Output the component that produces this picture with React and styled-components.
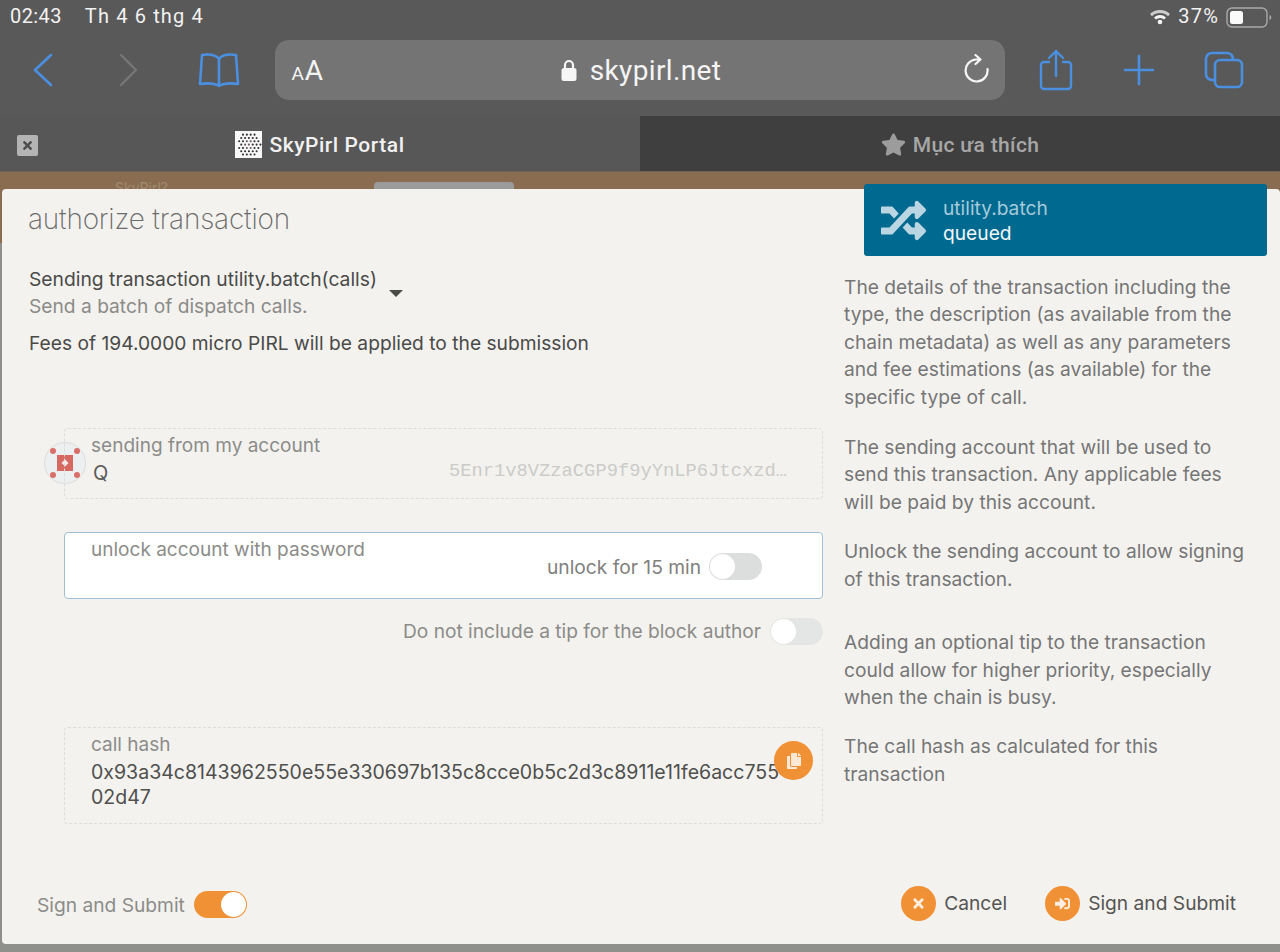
import React from "react";
import styled, { createGlobalStyle } from "styled-components";
import { FaRandom, FaCopy, FaTimes, FaSignInAlt, FaStar } from "react-icons/fa";

const Global = createGlobalStyle`
  html, body { margin: 0; padding: 0; background: #8f8f8c; }
  * { box-sizing: border-box; }
  body { font-family: Inter, "Liberation Sans", sans-serif; }
`;

const Screen = styled.div`
  position: relative;
  width: 1280px;
  height: 952px;
  overflow: hidden;
  display: flex;
  flex-direction: column;
`;

const Chrome = styled.div`
  height: 116px;
  background: #595959;
  display: flex;
  flex-direction: column;
`;

const StatusBar = styled.div`
  height: 40px;
  padding: 4px 8px 0 10px;
  display: flex;
  justify-content: space-between;
  color: #f2f2f2;
  font-family: Roboto, Inter, sans-serif;
  font-size: 20px;
  line-height: 24px;
  letter-spacing: 0.4px;
`;

const StatusLeft = styled.div`
  display: flex;
  gap: 23px;
`;

const DateText = styled.span`
  letter-spacing: 1.15px;
`;

const StatusRight = styled.div`
  display: flex;
  align-items: flex-start;
  gap: 7px;
`;

const Percent = styled.span`
  letter-spacing: 1.2px;
`;

const Toolbar = styled.div`
  height: 60px;
  display: flex;
  align-items: center;
  justify-content: space-between;
  padding: 0 36px 0 32px;
`;

const NavGroup = styled.div`
  width: 208px;
  display: flex;
  align-items: center;
  justify-content: space-between;
`;

const ActionGroup = styled.div`
  width: 205px;
  display: flex;
  align-items: center;
  justify-content: space-between;
`;

const AddressBar = styled.div`
  width: 730px;
  height: 60px;
  border-radius: 14px;
  background: #747474;
  display: grid;
  grid-template-columns: 100px 1fr 100px;
  align-items: center;
  padding: 0 14px 0 17px;
  color: #f4f4f4;
`;

const TextSize = styled.div`
  font-family: Roboto, Inter, sans-serif;
  font-size: 28px;
  letter-spacing: 0.8px;
  small { font-size: 19px; }
`;

const Domain = styled.div`
  display: flex;
  align-items: center;
  justify-content: center;
  gap: 13px;
  font-family: Roboto, Inter, sans-serif;
  font-size: 28px;
  letter-spacing: 0.35px;
`;

const ReloadSlot = styled.div`
  display: flex;
  justify-content: flex-end;
`;

const TabBar = styled.div`
  height: 56px;
  display: flex;
  border-bottom: 1px solid #6f6250;
`;

const Tab = styled.div`
  position: relative;
  flex: 1;
  display: flex;
  align-items: center;
  justify-content: center;
  gap: 7px;
  padding-top: 2px;
  font-family: Roboto, Inter, sans-serif;
  font-size: 21px;
  font-weight: 500;
  letter-spacing: ${(p) => (p.$active ? 0.55 : 0.35)}px;
  background: ${(p) => (p.$active ? "#575757" : "#3f3f3f")};
  color: ${(p) => (p.$active ? "#f1f1f1" : "#a7a7a7")};
`;

const TabClose = styled.div`
  position: absolute;
  left: 17px;
  top: 19px;
  width: 21px;
  height: 21px;
  border-radius: 2px;
  background: #b4b4b4;
  color: #4c4c4c;
  display: flex;
  align-items: center;
  justify-content: center;
  font-size: 13px;
`;

const PageArea = styled.div`
  flex: 1;
  min-height: 0;
  display: flex;
  flex-direction: column;
  padding: 10px 0 8px 2px;
  background: linear-gradient(#8a6d50 0, #8a6d50 71px, #8f8f8c 71px);
`;

const BehindBar = styled.div`
  height: 7px;
  overflow: hidden;
  display: flex;
  flex: none;
  padding-left: 113px;
  gap: 206px;
`;

const BehindText = styled.div`
  color: #a08b72;
  font-size: 14px;
  line-height: 16px;
  margin-top: -2px;
`;

const BehindTab = styled.div`
  width: 140px;
  height: 20px;
  background: #9b9b9b;
  border-radius: 4px;
`;

const Modal = styled.div`
  flex: 1;
  min-height: 0;
  display: flex;
  flex-direction: column;
  background: #f3f2ef;
  border-radius: 4px 4px 0 4px;
`;

const Title = styled.h1`
  margin: 0;
  height: 79px;
  padding: 12px 0 0 26px;
  font-size: 28px;
  line-height: 36px;
  font-weight: 200;
  letter-spacing: -0.2px;
  color: #6b6b69;
`;

const Row = styled.div`
  display: grid;
  grid-template-columns: 842px 1fr;
  margin-bottom: ${(p) => p.$gap ?? 16}px;
`;

const HelpText = styled.div`
  padding: 6px 26px 0 0;
  font-size: 19.2px;
  line-height: 27.4px;
  color: #767676;
`;

const Summary = styled.div`
  padding: 0 0 0 27px;
  font-size: 19.2px;
`;

const CallLine = styled.div`
  display: flex;
  align-items: center;
  gap: 12px;
  margin-top: -2px;
`;

const CallText = styled.div`
  font-size: 19.3px;
  line-height: 27px;
  color: #4a4a48;
  span { display: block; font-size: 19.2px; color: #8b8b88; }
`;

const Caret = styled.div`
  width: 0;
  height: 0;
  border-left: 7px solid transparent;
  border-right: 7px solid transparent;
  border-top: 7px solid #4a4a48;
`;

const Fees = styled.div`
  margin-top: 10px;
  line-height: 27px;
  color: #4a4a48;
`;

const FieldWrap = styled.div`
  position: relative;
  padding: 0 21px 0 62px;
`;

const Field = styled.div`
  position: relative;
  height: ${(p) => p.$h}px;
  padding: 5px 26px 0;
  border: 1px ${(p) => (p.$focus ? "solid #9fc0d4" : "dashed #dcdcd9")};
  border-radius: 4px;
  background: ${(p) => (p.$focus ? "#fff" : "transparent")};
`;

const Label = styled.div`
  font-size: 19.05px;
  line-height: 24px;
  color: #8c8c89;
`;

const Avatar = styled.svg`
  position: absolute;
  left: 42px;
  top: 14px;
`;

const AccountName = styled.div`
  margin: 3px 0 0 2px;
  font-size: 20px;
  line-height: 24px;
  color: #5c5c5a;
`;

const Address = styled.div`
  position: absolute;
  right: 35px;
  top: 31px;
  font-family: "Liberation Mono", monospace;
  font-size: 18.8px;
  line-height: 22px;
  color: #cbcbc8;
`;

const ToggleLine = styled.div`
  position: absolute;
  right: 60px;
  top: 20px;
  display: flex;
  align-items: center;
  gap: 8px;
  font-size: 19.2px;
  color: #80807d;
`;

const TipLine = styled.div`
  display: flex;
  justify-content: flex-end;
  align-items: center;
  gap: 9px;
  height: 26px;
  margin-top: -5px;
  font-size: 19.15px;
  color: #8c8c89;
`;

const Toggle = styled.div`
  width: 53px;
  height: 27px;
  padding: 1px;
  flex: none;
  border-radius: 14px;
  display: flex;
  justify-content: ${(p) => (p.$on ? "flex-end" : "flex-start")};
  background: ${(p) => (p.$on ? "#f19135" : p.$soft ? "#e4e6e5" : "#dcdedd")};
  i {
    width: 25px;
    height: 25px;
    border-radius: 50%;
    background: #fff;
  }
`;

const Hash = styled.div`
  margin-top: 3px;
  width: 695px;
  word-break: break-all;
  font-size: 19.55px;
  line-height: 25px;
  color: #4f4f4d;
`;

const CopyBtn = styled.div`
  position: absolute;
  right: 9px;
  top: 13px;
  width: 39px;
  height: 39px;
  border-radius: 50%;
  background: #f19135;
  color: #fbe9d6;
  display: flex;
  align-items: center;
  justify-content: center;
  font-size: 16px;
`;

const Footer = styled.div`
  margin-top: auto;
  height: 82px;
  padding: 0 44px 0 35px;
  display: flex;
  align-items: center;
  justify-content: space-between;
`;

const FooterLeft = styled.div`
  display: flex;
  align-items: center;
  gap: 9px;
  margin-top: 3px;
  font-size: 19.2px;
  color: #8c8c89;
`;

const FooterRight = styled.div`
  display: flex;
  align-items: center;
  gap: 38px;
`;

const ActionButton = styled.div`
  display: flex;
  align-items: center;
  gap: 8px;
  font-size: 19.2px;
  color: #555553;
`;

const ActionIcon = styled.div`
  width: 35px;
  height: 35px;
  border-radius: 50%;
  background: #f19135;
  color: #fdf0e2;
  display: flex;
  align-items: center;
  justify-content: center;
  font-size: 15px;
`;

const Toast = styled.div`
  position: absolute;
  left: 864px;
  top: 184px;
  width: 403px;
  height: 72px;
  padding: 0 0 0 17px;
  border-radius: 3px;
  background: #00698f;
  display: flex;
  align-items: center;
  gap: 17px;
  color: #b9d6e2;
  font-size: 45px;
`;

const ToastText = styled.div`
  padding-top: 2px;
  font-size: 19.2px;
  line-height: 25px;
  color: #a5cbdb;
  b { display: block; font-weight: 400; color: #f2f7f9; }
`;

const blue = "#4a8fe0";

const Back = () => (
  <svg width="24" height="34" viewBox="0 0 24 34" fill="none" stroke={blue} strokeWidth="2.6" strokeLinecap="round" strokeLinejoin="round">
    <path d="M19 2 3 17l16 15" />
  </svg>
);
const Forward = () => (
  <svg width="24" height="34" viewBox="0 0 24 34" fill="none" stroke="#767676" strokeWidth="2.4" strokeLinecap="round" strokeLinejoin="round">
    <path d="M6 2l15 15L6 32" />
  </svg>
);
const Book = () => (
  <svg width="42" height="36" viewBox="0 0 42 36" fill="none" stroke={blue} strokeWidth="2.6" strokeLinejoin="round" strokeLinecap="round">
    <path d="M21 7C18 3 11 2 4 3L2 32c7-1 14-1 19 2 5-3 12-3 19-2L38 3c-7-1-14 0-17 4Zm0 0v27" />
  </svg>
);
const Share = () => (
  <svg width="34" height="42" viewBox="0 0 34 42" fill="none" stroke={blue} strokeWidth="2.4" strokeLinecap="round" strokeLinejoin="round">
    <path d="M10 13H5a3 3 0 0 0-3 3v21a3 3 0 0 0 3 3h24a3 3 0 0 0 3-3V16a3 3 0 0 0-3-3h-5M17 27V2M10 9l7-7 7 7" />
  </svg>
);
const Plus = () => (
  <svg width="32" height="32" viewBox="0 0 32 32" stroke={blue} strokeWidth="2.6" strokeLinecap="round">
    <path d="M16 2v28M2 16h28" />
  </svg>
);
const Tabs = () => (
  <svg width="40" height="38" viewBox="0 0 40 38" fill="none" stroke={blue} strokeWidth="2.6" strokeLinejoin="round">
    <rect x="2" y="2" width="27" height="27" rx="6" />
    <rect x="11" y="9" width="27" height="27" rx="5" fill="#595959" />
  </svg>
);
const Lock = () => (
  <svg width="16" height="22" viewBox="0 0 16 22">
    <path d="M4 10V6a4 4 0 0 1 8 0v4" fill="none" stroke="#f6f6f6" strokeWidth="2.2" />
    <rect x="0.5" y="9" width="15" height="13" rx="2.5" fill="#f6f6f6" />
  </svg>
);
const Reload = () => (
  <svg width="28" height="32" viewBox="0 0 28 32" fill="none" stroke="#f6f6f6" strokeWidth="2.2" strokeLinecap="round" strokeLinejoin="round">
    <path d="M24.5 15a11 11 0 1 1-11.5-9.5h4M12.5 1l5 4.5-5 4.5" />
  </svg>
);
const Wifi = () => (
  <svg width="22" height="18" viewBox="0 0 22 18" style={{ marginTop: 3 }} fill="#f4f4f4">
    <path d="M11 3C7 3 3.600 4.500 1 7l2 2.200C5 7.200 7.900 6 11 6s6 1.200 8 3.200L21 7c-2.600-2.500-6-4-10-4Z" opacity=".75" />
    <path d="M11 8c-2.300 0-4.400.9-6 2.400l2 2.200A5.800 5.800 0 0 1 11 11c1.500 0 2.900.6 4 1.600l2-2.200A8.700 8.700 0 0 0 11 8Z" />
    <circle cx="11" cy="15" r="2.300" />
  </svg>
);
const Battery = () => (
  <svg width="46" height="22" viewBox="0 0 46 22" style={{ marginTop: 3 }}>
    <rect x="1" y="1" width="40" height="19" rx="5" fill="none" stroke="#a9a9a9" strokeWidth="1.400" />
    <rect x="4" y="4" width="13" height="13" rx="2.500" fill="#fafafa" />
    <path d="M43.500 8c1.300.5 1.800 1.500 1.800 2.500s-.5 2-1.800 2.500Z" fill="#a9a9a9" />
  </svg>
);
const Favicon = () => {
  const dots = [];
  for (let r = 0; r < 7; r += 1) {
    for (let c = 0; c < 6; c += 1) {
      const off = r % 2 ? 2 : 0;
      const cx = 4 + c * 3.7 + off;
      const cy = 3.5 + r * 3.2;
      const dist = Math.hypot(cx - 13, cy - 13);
      if (dist < 12) dots.push(<circle key={`${r}-${c}`} cx={cx} cy={cy} r="1" fill={dist < 4 ? "#6a5555" : "#2f2f2f"} />);
    }
  }
  return (
    <svg width="27" height="27" viewBox="0 0 26 26">
      <rect width="26" height="26" fill="#f7f7f7" />
      {dots}
    </svg>
  );
};
const Identicon = () => (
  <Avatar width="42" height="42" viewBox="0 0 42 42">
    <circle cx="21" cy="21" r="20.500" fill="#edf0f0" stroke="#dedcda" />
    {[[9, 9], [33, 9], [9, 33], [33, 33]].map(([x, y]) => (
      <circle key={`${x}${y}`} cx={x} cy={y} r="3" fill="#d86f68" />
    ))}
    <rect x="13" y="13" width="16" height="16" fill="#d66a63" />
    <path d="M21 17.500 24.500 21 21 24.500 17.500 21Z" fill="#f7ecea" />
  </Avatar>
);

export default function App() {
  return (
    <Screen>
      <Global />
      <Chrome>
        <StatusBar>
          <StatusLeft>
            <span>02:43</span>
            <DateText>Th 4 6 thg 4</DateText>
          </StatusLeft>
          <StatusRight>
            <Wifi />
            <Percent>37%</Percent>
            <Battery />
          </StatusRight>
        </StatusBar>
        <Toolbar>
          <NavGroup>
            <Back />
            <Forward />
            <Book />
          </NavGroup>
          <AddressBar>
            <TextSize>
              <small>A</small>A
            </TextSize>
            <Domain>
              <Lock />
              skypirl.net
            </Domain>
            <ReloadSlot>
              <Reload />
            </ReloadSlot>
          </AddressBar>
          <ActionGroup>
            <Share />
            <Plus />
            <Tabs />
          </ActionGroup>
        </Toolbar>
      </Chrome>
      <TabBar>
        <Tab $active>
          <TabClose>
            <FaTimes />
          </TabClose>
          <Favicon />
          SkyPirl Portal
        </Tab>
        <Tab>
          <FaStar color="#9c9c9c" size={25} />
          Mục ưa thích
        </Tab>
      </TabBar>
      <PageArea>
        <BehindBar>
          <BehindText>SkyPirl?</BehindText>
          <BehindTab />
        </BehindBar>
        <Modal>
          <Title>authorize transaction</Title>
          <Row $gap={17}>
            <Summary>
              <CallLine>
                <CallText>
                  Sending transaction utility.batch(calls)
                  <span>Send a batch of dispatch calls.</span>
                </CallText>
                <Caret />
              </CallLine>
              <Fees>Fees of 194.0000 micro PIRL will be applied to the submission</Fees>
            </Summary>
            <HelpText>
              The details of the transaction including the type, the description (as available from the chain metadata) as well as any parameters and fee estimations (as available) for the specific type of call.
            </HelpText>
          </Row>
          <Row>
            <FieldWrap>
              <Identicon />
              <Field $h={71}>
                <Label>sending from my account</Label>
                <AccountName>Q</AccountName>
                <Address>5Enr1v8VZzaCGP9f9yYnLP6Jtcxzd…</Address>
              </Field>
            </FieldWrap>
            <HelpText>
              The sending account that will be used to send this transaction. Any applicable fees will be paid by this account.
            </HelpText>
          </Row>
          <Row $gap={24}>
            <FieldWrap>
              <Field $h={67} $focus>
                <Label>unlock account with password</Label>
                <ToggleLine>
                  unlock for 15 min
                  <Toggle>
                    <i />
                  </Toggle>
                </ToggleLine>
              </Field>
            </FieldWrap>
            <HelpText>Unlock the sending account to allow signing of this transaction.</HelpText>
          </Row>
          <Row>
            <FieldWrap>
              <TipLine>
                Do not include a tip for the block author
                <Toggle $soft>
                  <i />
                </Toggle>
              </TipLine>
            </FieldWrap>
            <HelpText>
              Adding an optional tip to the transaction could allow for higher priority, especially when the chain is busy.
            </HelpText>
          </Row>
          <Row>
            <FieldWrap>
              <Field $h={97}>
                <Label>call hash</Label>
                <Hash>0x93a34c8143962550e55e330697b135c8cce0b5c2d3c8911e11fe6acc75502d47</Hash>
                <CopyBtn>
                  <FaCopy />
                </CopyBtn>
              </Field>
            </FieldWrap>
            <HelpText>The call hash as calculated for this transaction</HelpText>
          </Row>
          <Footer>
            <FooterLeft>
              Sign and Submit
              <Toggle $on>
                <i />
              </Toggle>
            </FooterLeft>
            <FooterRight>
              <ActionButton>
                <ActionIcon>
                  <FaTimes />
                </ActionIcon>
                Cancel
              </ActionButton>
              <ActionButton>
                <ActionIcon>
                  <FaSignInAlt />
                </ActionIcon>
                Sign and Submit
              </ActionButton>
            </FooterRight>
          </Footer>
        </Modal>
      </PageArea>
      <Toast>
        <FaRandom />
        <ToastText>
          utility.batch
          <b>queued</b>
        </ToastText>
      </Toast>
    </Screen>
  );
}
